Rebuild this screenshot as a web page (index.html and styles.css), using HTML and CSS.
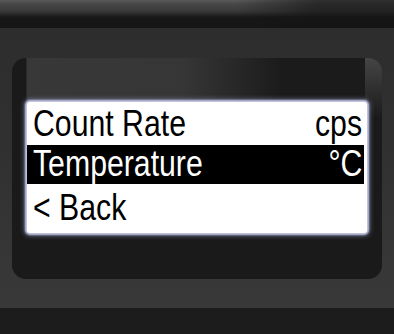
FILE: index.html
```html
<!DOCTYPE html>
<html lang="en">
<head>
    <meta charset="UTF-8">
    <title>LCD Menu</title>
    <link rel="stylesheet" href="styles.css">
</head>
<body>
<div class="topBar"></div>
<div class="panel">
    <div class="bezel">
        <ul class="screen">
            <li class="row first"><span class="label">Count Rate</span><span class="unit">cps</span></li>
            <li class="row active"><span class="label">Temperature</span><span class="unit">°C</span></li>
            <li class="row last"><span class="label">&lt; Back</span></li>
        </ul>
    </div>
</div>
<div class="bottomBar"></div>
</body>
</html>
```

FILE: styles.css
```css
*{ margin: 0; padding: 0; list-style: none; box-sizing: border-box; }
body{ background: #1d1d1d; width: 394px; height: 334px; overflow: hidden; }

.topBar{ height: 28px; background: linear-gradient(to right, rgba(0,0,0,0) 0, rgba(0,0,0,0) 60%, rgba(20,20,20,.6) 80%), linear-gradient(to bottom, #5a5a5a 0, #474747 4px, #3a3a3a 11px, #181818 17px, #151515 27px); }
.panel{ height: 280px; padding: 30px 12px 29px; background: linear-gradient(to bottom, #2d2d2d 0, #303030 40%, #393939 100%); }
.bottomBar{ height: 26px; background: #1c1c1c; }

/* screen frame */
.bezel{ height: 221px; padding: 44px 15px 46px; border-radius: 14px; background-color: #1a1a1a;
    background-image: linear-gradient(to bottom, #454545, #1a1a1a), linear-gradient(to right, #1a1a1a 0, #1a1a1a 14px, #383838 15px, #363636 170px, #262626 230px, #1b1b1b 270px);
    background-size: 17px 60px, 100% 44px;
    background-position: right top, left top;
    background-repeat: no-repeat; }

.screen{ height: 131px; background: #fff; border-radius: 3px; box-shadow: 0 0 2px 2px #c5c9e6, 0 0 5px 3px rgba(150,160,210,.5);
    font: 36px/34px "Liberation Sans", Arial, sans-serif; color: #000; }
.screen .row{ display: flex; justify-content: space-between; padding: 0 5px 0 6px; }
.screen .label, .screen .unit{ display: inline-block; white-space: pre; transform: scaleX(0.84); }
.screen .label{ transform-origin: left center; }
.screen .unit{ transform-origin: right center; }
.screen .first{ height: 43px; padding-top: 5px; }
.screen .active{ height: 39px; padding-top: 2px; margin-right: 3px; padding-right: 2px; background: #000; color: #fff; }
.screen .last{ height: 49px; padding-top: 7px; }
```
